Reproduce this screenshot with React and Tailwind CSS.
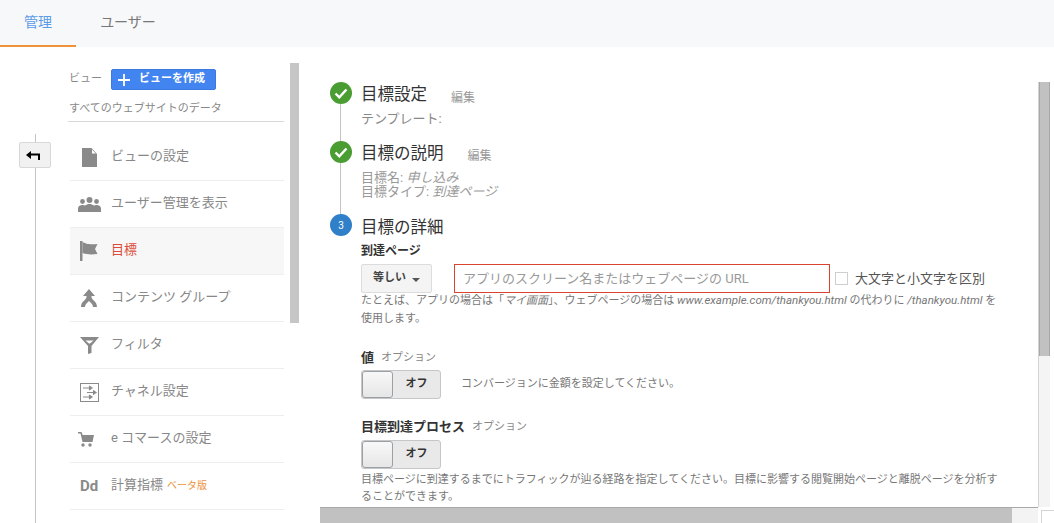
import React from "react";

const FONT = "font-['Roboto','Noto_Sans_CJK_JP',sans-serif]";

function DocIcon() {
  return (
    <svg width="15" height="19" viewBox="0 0 15 19" fill="#8a8a8a">
      <path d="M0 0h9.500L15 6v13H0z" />
      <path d="M10 1.500V5.500h3.800z" fill="#fff" />
    </svg>
  );
}

function UsersIcon() {
  return (
    <svg width="23" height="15" viewBox="0 0 23 15" fill="#8a8a8a">
      <circle cx="11.500" cy="3" r="3" />
      <circle cx="4.500" cy="4.500" r="2.400" />
      <circle cx="18.500" cy="4.500" r="2.400" />
      <path d="M0 15v-3.500C0 9 2.500 8 4.500 8c1.200 0 2 .2 2.600.6C8.200 7.700 9.800 7 11.500 7s3.300.7 4.400 1.600c.6-.4 1.400-.6 2.600-.6 2 0 4.500 1 4.500 3.500V15z" />
    </svg>
  );
}

function FlagIcon() {
  return (
    <svg width="18" height="20" viewBox="0 0 18 20" fill="#8a8a8a">
      <path d="M0 0h2.500v20H0z" />
      <path d="M2.500 1c4 2 6 2.500 15 2l-2.500 5 2.500 5c-7 .8-10 .5-15-1z" />
    </svg>
  );
}

function MergeIcon() {
  return (
    <svg width="16" height="18" viewBox="0 0 16 18" fill="#8a8a8a">
      <path d="M8 0l6 7h-3.500v1c0 3 5.500 4 5.500 10h-4c0-3.500-4-5-4-6.500C8 13 4 14.500 4 18H0c0-6 5.500-7 5.500-10V7H2z" />
    </svg>
  );
}

function FilterIcon() {
  return (
    <svg width="19" height="17" viewBox="0 0 19 17" fill="#8a8a8a">
      <path d="M0 0h19l-7.500 9v7l-3.500 1V9zM5.500 3.500l3.500 3h1l3.500-3z" fillRule="evenodd" />
    </svg>
  );
}

function ChannelIcon() {
  return (
    <svg width="19" height="19" viewBox="0 0 19 19">
      <rect x="0.500" y="0.500" width="18" height="18" fill="none" stroke="#8a8a8a" />
      <path d="M3 5h6M9 3l3 2-3 2M7 9.500h6M13 7.500l3 2-3 2M3 14h6M9 12l3 2-3 2" fill="#8a8a8a" stroke="#8a8a8a" strokeWidth="1.200" />
    </svg>
  );
}

function CartIcon() {
  return (
    <svg width="16" height="15" viewBox="0 0 16 15" fill="#8a8a8a" className="mr-[6px]">
      <path d="M0 0h3.500l1.200 3H16l-1.500 7H4.500L2.500 1.500H0z" />
      <circle cx="5" cy="13" r="1.700" />
      <circle cx="12" cy="13" r="1.700" />
    </svg>
  );
}

const navItems = [
  { label: "ビューの設定", icon: <DocIcon /> },
  { label: "ユーザー管理を表示", icon: <UsersIcon /> },
  { label: "目標", icon: <FlagIcon />, active: true },
  { label: "コンテンツ グループ", icon: <MergeIcon /> },
  { label: "フィルタ", icon: <FilterIcon /> },
  { label: "チャネル設定", icon: <ChannelIcon /> },
  { label: "e コマースの設定", icon: <CartIcon /> },
  {
    label: "計算指標",
    icon: <span className="text-[15px] font-bold text-[#8a8a8a]">Dd</span>,
    beta: true,
  },
];

function Toggle() {
  return (
    <div className="flex h-[29px] w-[80px] overflow-hidden rounded-[3px] border border-[#c6c6c6] bg-[#e9e9e9]">
      <div className="w-[31px] rounded-[3px] border border-[#9aa0a6] bg-gradient-to-b from-[#f8f8f8] to-[#e6e6e6]" />
      <div className="flex flex-1 items-center justify-center text-[11px] font-bold text-[#333]">オフ</div>
    </div>
  );
}

function Check() {
  return (
    <svg width="14" height="11" viewBox="0 0 14 11" fill="none" stroke="#fff" strokeWidth="2.400">
      <path d="M1.500 5.500l3.800 3.800L12.500 1.500" />
    </svg>
  );
}

function Step({ circle, line, className, children }) {
  return (
    <div className={`flex gap-[9px] ${className}`}>
      <div className="flex w-[22px] shrink-0 flex-col items-center">
        {circle}
        {line && <div className="mr-[1px] w-px flex-1 bg-[#c4c4c4]" />}
      </div>
      <div className="min-w-0 flex-1">{children}</div>
    </div>
  );
}

const doneCircle = (
  <div className="flex h-[22px] w-[22px] shrink-0 items-center justify-center rounded-full bg-[#4a9d33]">
    <Check />
  </div>
);

export default function App() {
  return (
    <div className={`${FONT} flex h-[523px] w-[1054px] flex-col overflow-hidden bg-white`}>
      {/* Tabs */}
      <div className="flex h-[47px] shrink-0 bg-[#f7f8fa]">
        <div className="flex w-[76px] items-center justify-center border-b-2 border-[#ee9339] text-[14px] text-[#5b9be8]">管理</div>
        <div className="flex w-[104px] items-center justify-center pb-[2px] text-[14px] text-[#777]">ユーザー</div>
      </div>

      <div className="flex min-h-0 flex-1">
        {/* Left rail */}
        <div className="flex w-[70px] shrink-0 flex-col">
          <div className="ml-[35px] mt-[87px] w-px flex-1 bg-[#c4c4c4]" />
          <div className="absolute left-[19px] top-[142px] flex h-[26px] w-[32px] items-center justify-center rounded-[2px] border border-[#d8d8d8] bg-[#f1f1f1]">
            <svg width="14" height="10" viewBox="0 0 14 10" fill="#000" className="mr-[4px]">
              <path d="M0 5l5-4v2.500h9V10h-2V5.500H5V9z" />
            </svg>
          </div>
        </div>

        {/* Sidebar */}
        <div className="w-[214px] shrink-0">
          <div className="-ml-[1px] mt-[21px] flex h-[22px] items-center gap-[9px] pt-[1px] text-[11px] text-[#888]">
            <span>ビュー</span>
            <div className="flex h-[21px] w-[105px] items-center gap-[9px] rounded-[2px] border border-[#3b78e0] bg-[#4285f0] pl-[6px] text-[11px] font-bold text-white">
              <svg width="12" height="12" viewBox="0 0 12 12" stroke="#fff" strokeWidth="1.800">
                <path d="M6 0v12M0 6h12" />
              </svg>
              <span>ビューを作成</span>
            </div>
          </div>
          <div className="-ml-[2px] mt-[11px] h-[21px] w-[216px] border-b border-[#d9d9d9] pl-[1px] text-[11px] leading-[15px] text-[#888]">
            すべてのウェブサイトのデータ
          </div>
          <div className="mt-[12px]">
            {navItems.map((item) => (
              <div
                key={item.label}
                className={`flex h-[47px] items-center border-b border-[#eeeeee] ${item.active ? "bg-[#f7f7f7]" : ""}`}
              >
                <div className="flex w-[38px] shrink-0 items-center justify-center">{item.icon}</div>
                <span className={`mb-[2px] ml-[3px] text-[13px] ${item.active ? "text-[#dd4b39]" : "text-[#888]"}`}>{item.label}</span>
                {item.beta && <span className="mb-[2px] ml-[4px] text-[10px] text-[#ee9339]">ベータ版</span>}
              </div>
            ))}
          </div>
        </div>

        {/* Sidebar scrollbar */}
        <div className="ml-[6px] mt-[16px] h-[260px] w-[9px] shrink-0 bg-[#c6c6c6]" />

        {/* Main panel */}
        <div className="ml-[21px] flex min-w-0 flex-1 flex-col">
          <div className="flex min-h-0 flex-1">
            <div className="min-w-0 flex-1 overflow-hidden pl-[10px] pt-[35px]">
              <Step circle={doneCircle} line className="h-[59px]">
                <div className="mt-[2px] flex h-[22px] items-center">
                  <span className="text-[16.5px] text-[#333]">目標設定</span>
                  <span className="ml-[24px] mt-[5px] text-[12px] text-[#999]">編集</span>
                </div>
                <div className="mt-[5px] text-[13px] leading-[16px] text-[#888]">テンプレート:</div>
              </Step>

              <Step circle={doneCircle} line className="h-[73px]">
                <div className="mt-[2px] flex h-[22px] items-center">
                  <span className="text-[16.5px] text-[#333]">目標の説明</span>
                  <span className="ml-[24px] mt-[4px] text-[12px] text-[#999]">編集</span>
                </div>
                <div className="mt-[6px] text-[13px] leading-[14px] text-[#999]">
                  目標名: <i>申し込み</i>
                  <br />
                  目標タイプ: <i>到達ページ</i>
                </div>
              </Step>

              <Step
                className="h-[290px]"
                circle={
                  <div className="flex h-[22px] w-[22px] items-center justify-center rounded-full bg-[#2f7fc9] text-[10px] text-white">3</div>
                }
              >
                <div className="mt-[1px] flex h-[26px] items-center text-[16.5px] text-[#333]">目標の詳細</div>
                <div className="mt-[2px] text-[12px] font-bold leading-[16px] text-[#333]">到達ページ</div>
                <div className="mt-[5px] flex items-center">
                  <div className="flex h-[29px] w-[71px] items-center justify-center gap-[6px] rounded-[2px] border border-[#dcdcdc] bg-[#f4f4f4] text-[11px] font-bold text-[#444]">
                    等しい
                    <span className="mt-[2px] border-x-[4px] border-t-[4px] border-x-transparent border-t-[#555]" />
                  </div>
                  <div className="ml-[22px] flex h-[29px] w-[376px] items-center border border-[#d9432f] pl-[8px] text-[13px] text-[#999]">
                    アプリのスクリーン名またはウェブページの URL
                  </div>
                  <div className="ml-[5px] h-[13px] w-[13px] border border-[#cfcfcf]" />
                  <span className="ml-[7px] text-[13px] text-[#555]">大文字と小文字を区別</span>
                </div>
                <p className="mt-[-2px] w-[640px] text-[11px] leading-[18px] text-[#777]">
                  たとえば、アプリの場合は「<i>マイ画面</i>」、ウェブページの場合は <i className="text-[11.5px]">www.example.com/thankyou.html</i> の代わりに <i className="text-[11.5px]">/thankyou.html</i> を使用します。
                </p>
                <div className="mt-[21px] flex h-[18px] items-center gap-[7px]">
                  <span className="text-[13px] font-bold text-[#333]">値</span>
                  <span className="text-[11px] text-[#888]">オプション</span>
                </div>
                <div className="mt-[3px] flex items-center gap-[20px]">
                  <Toggle />
                  <span className="text-[11px] text-[#777]">コンバージョンに金額を設定してください。</span>
                </div>
                <div className="mt-[19px] flex h-[18px] items-center gap-[7px]">
                  <span className="text-[13px] font-bold text-[#333]">目標到達プロセス</span>
                  <span className="text-[11px] text-[#888]">オプション</span>
                </div>
                <div className="mt-[4px]">
                  <Toggle />
                </div>
                <p className="mt-[2px] w-[640px] text-[11px] leading-[17px] text-[#777]">
                  目標ページに到達するまでにトラフィックが辿る経路を指定してください。目標に影響する閲覧開始ページと離脱ページを分析することができます。
                </p>
              </Step>
            </div>
            {/* Vertical scrollbar */}
            <div className="mr-[4px] mt-[35px] flex w-[12px] shrink-0 flex-col border-l border-[#d5d5d5] bg-[#f4f4f4]">
              <div className="h-[274px] border-x border-[#a8a8a8] bg-[#c1c1c1]" />
            </div>
          </div>
          {/* Horizontal scrollbar */}
          <div className="flex h-[16px] shrink-0">
            <div className="flex w-[718px] shrink-0 border-t border-[#a8a8a8] bg-[#f3f3f3]">
              <div className="w-[692px] bg-[#c1c1c1]" />
            </div>
            <div className="ml-[3px] mt-[3px] flex-1 border-l border-t border-[#d5d5d5]" />
          </div>
        </div>
      </div>
    </div>
  );
}
